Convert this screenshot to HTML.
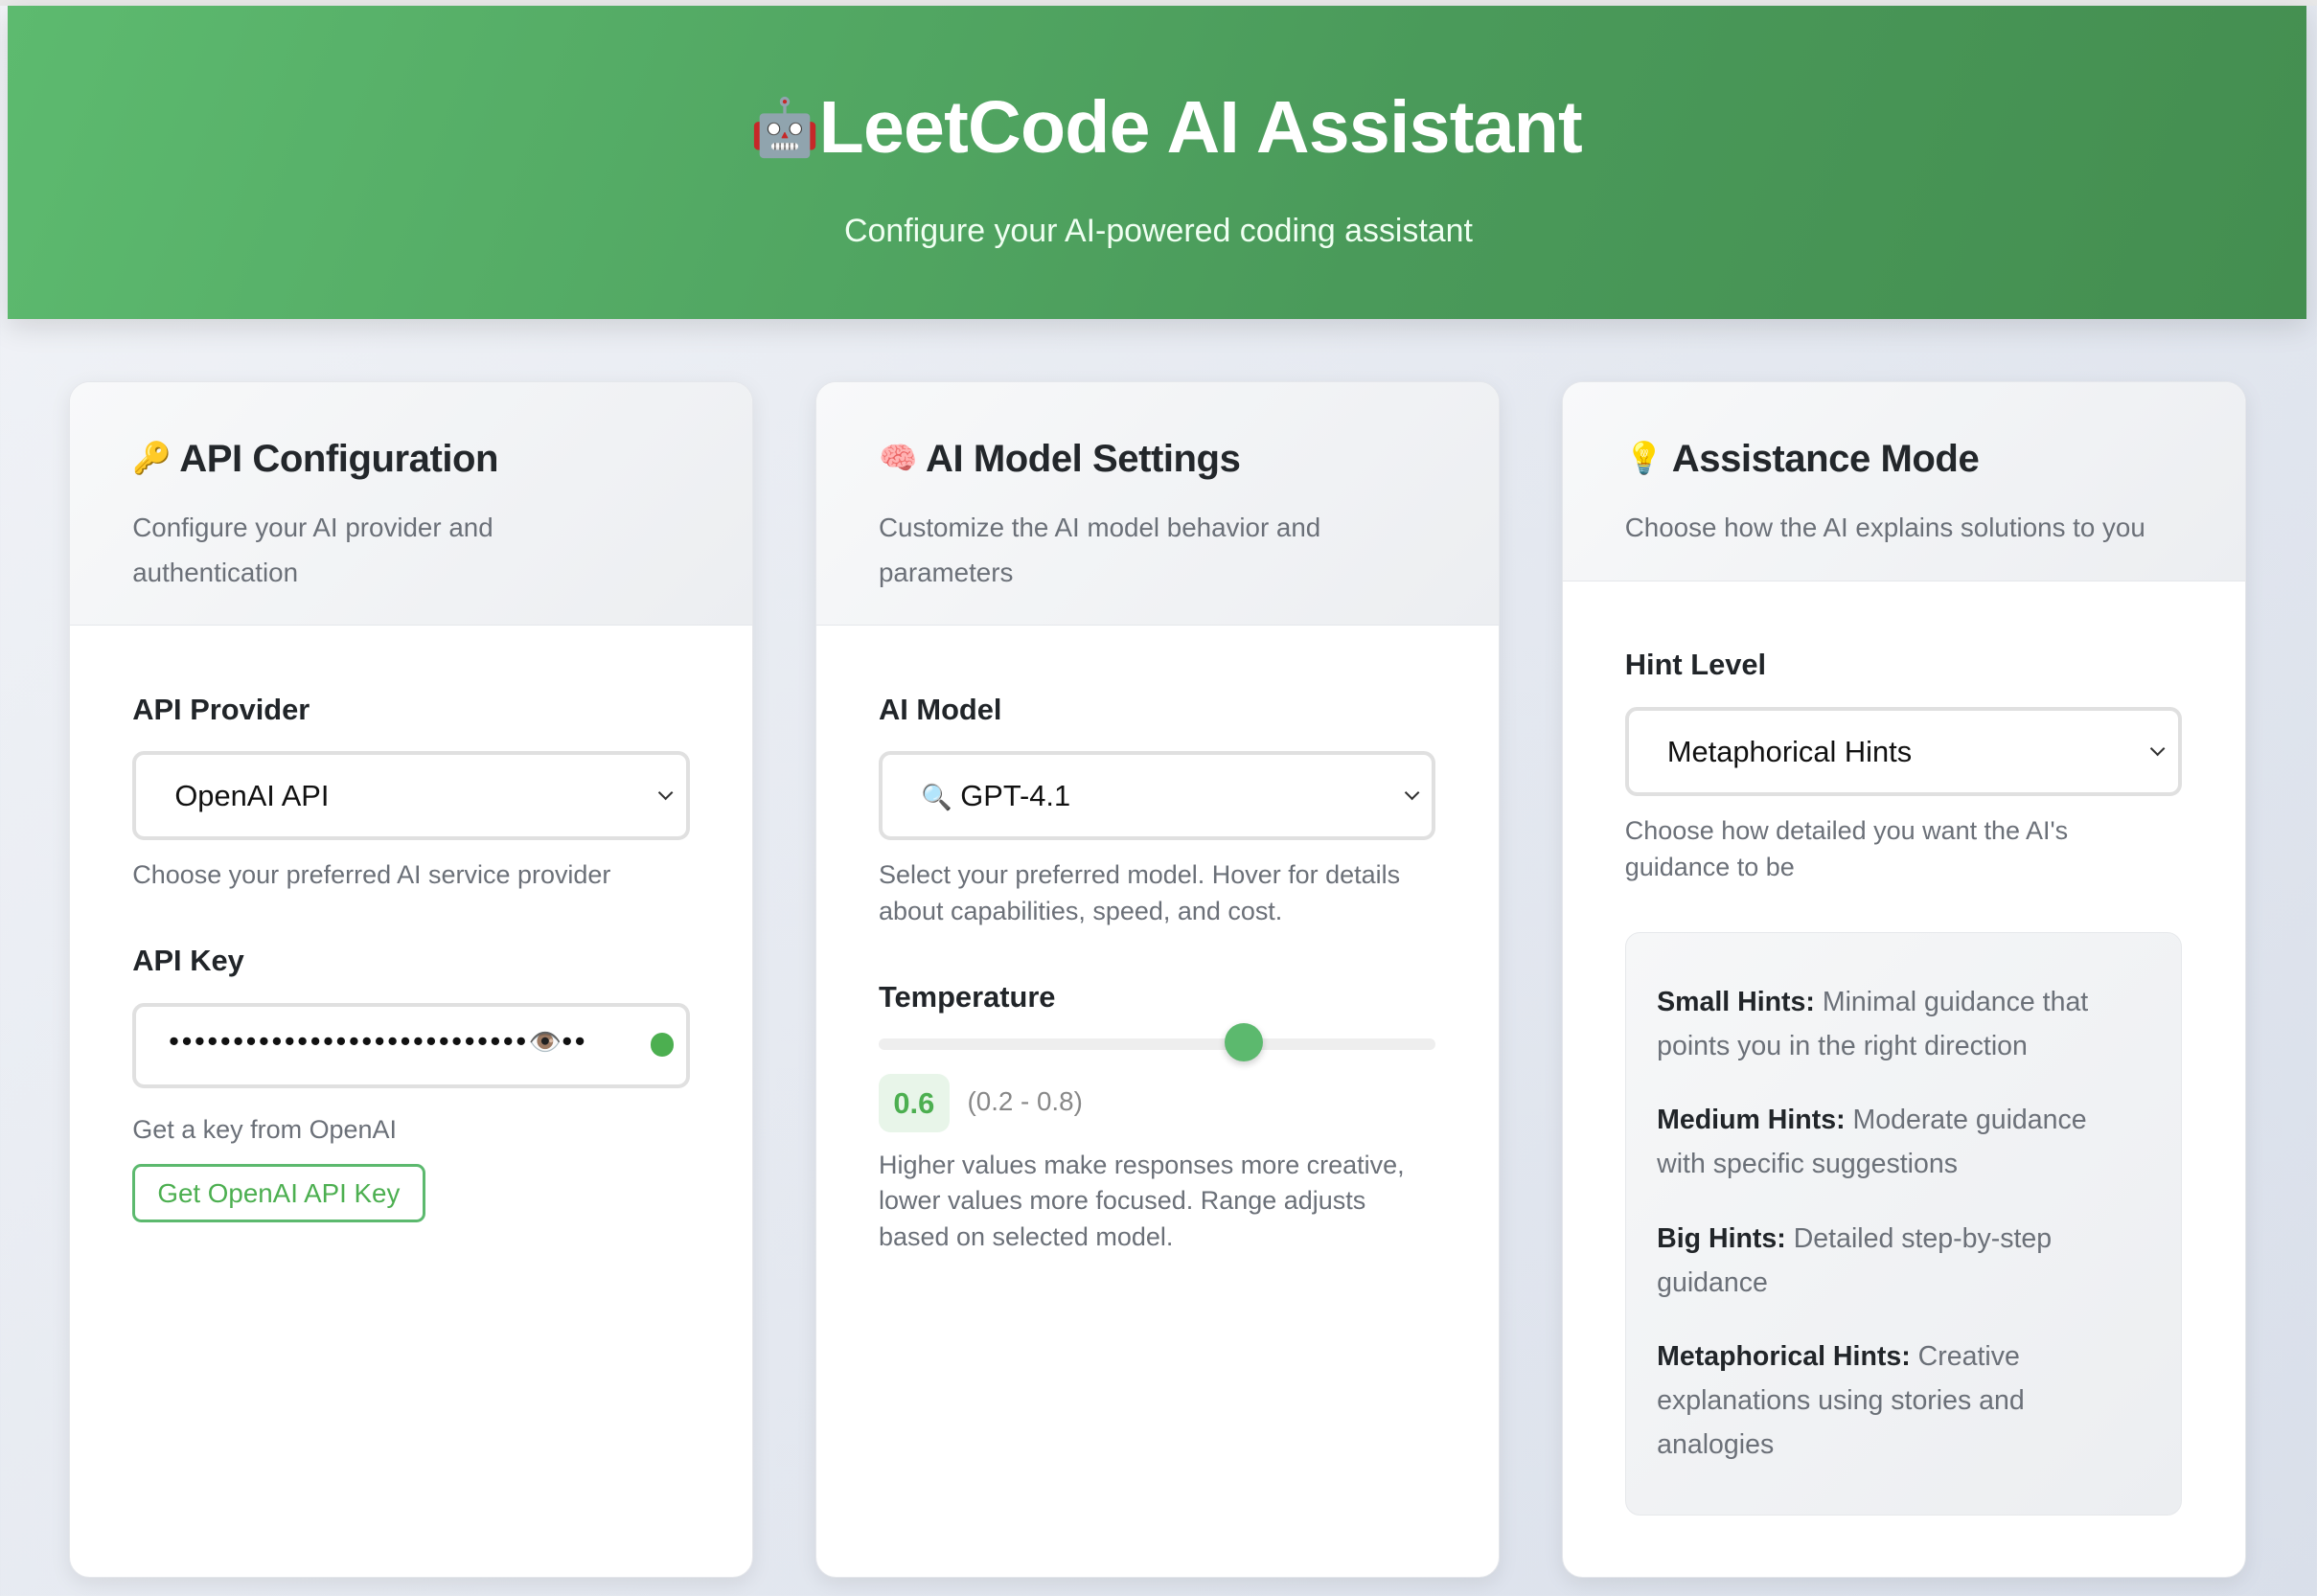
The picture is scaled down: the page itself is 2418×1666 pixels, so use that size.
<!DOCTYPE html>
<html><head><meta charset="utf-8"><style>
*{box-sizing:border-box;margin:0;padding:0}
html,body{width:2418px;height:1666px;overflow:hidden}
body{background:linear-gradient(135deg,#f1f3f7,#d9dfea);font-family:"Liberation Sans","Noto Sans CJK JP",sans-serif}
#w{zoom:1.5421;width:1568px;height:1080px;position:relative}
.a{position:absolute}
.hdr{left:5px;top:4px;width:1556px;height:212px;background:linear-gradient(110deg,#5dba6f,#4a9a5a 60%,#448e50);box-shadow:0 6px 18px rgba(0,0,0,.12)}
.top{left:0;top:0;width:1568px;height:4px;background:#e8e8e8}
h1{position:absolute;left:0;width:1568px;top:58px;text-align:center;color:#fff;font-size:50px;font-weight:700;letter-spacing:-.5px}
.sub{left:0;width:1568px;top:144px;text-align:center;color:#f0fff2;font-size:22px}
.card{top:258px;width:463px;height:810px;background:#fff;border-radius:14px;box-shadow:0 4px 14px rgba(0,0,0,.08);overflow:hidden;border:1px solid #e5e7eb}
.ch{position:absolute;left:0;top:0;width:100%;background:linear-gradient(135deg,#f8f9fa,#eceef1);border-bottom:1px solid #e5e7eb}
.ct{position:absolute;left:42px;top:38px;font-size:26px;font-weight:700;color:#23272b;letter-spacing:-.3px}
.ct i{font-style:normal;font-size:21px;vertical-align:2px}
.cd{position:absolute;left:42px;top:84px;width:340px;font-size:18px;line-height:30px;color:#6b7078}
.lbl{font-size:20px;font-weight:700;color:#212529}
.sel,.inp{width:377px;height:60px;border:3px solid #e0e0e0;border-radius:8px;font-size:20px;color:#111;padding:16px 0 0 26px}
.sel:after{content:"";position:absolute;right:10px;top:22px;width:6px;height:6px;border-right:1.5px solid #333;border-bottom:1.5px solid #333;transform:rotate(45deg)}
.help{font-size:17.5px;line-height:24.5px;color:#6b7078;width:380px}
.info b{color:#212529}
</style></head><body><div id="w">
<div class="a top"></div>
<div class="a hdr"><h1 style="top:54px"><span style="font-size:38px;vertical-align:4px">🤖</span>LeetCode AI Assistant</h1><div class="a sub" style="top:140px;left:-5px">Configure your AI-powered coding assistant</div></div>

<div class="a card" style="left:47px">
<div class="ch" style="height:165px"><div class="ct"><i>🔑</i> API Configuration</div><div class="cd">Configure your AI provider and authentication</div></div>
<div class="a lbl" style="left:42px;top:210px">API Provider</div>
<div class="a sel" style="left:42px;top:250px">OpenAI API</div>
<div class="a help" style="left:42px;top:322px">Choose your preferred AI service provider</div>
<div class="a lbl" style="left:42px;top:380px">API Key</div>
<div class="a inp" style="left:42px;top:420px;height:58px;padding:12px 0 0 22px;font-size:20px;letter-spacing:1.7px">••••••••••••••••••••••••••••<span style="font-size:18px;letter-spacing:0">👁️</span>••<span style="position:absolute;right:8px;top:18px;width:16px;height:16px;border-radius:50%;background:#4caf50"></span></div>
<div class="a help" style="left:42px;top:494px">Get a key from OpenAI</div>
<div class="a" style="left:42px;top:529px;width:198px;height:40px;border:2px solid #5cb96e;border-radius:6px;color:#4caf50;font-size:18px;padding:8px 0 0 15px">Get OpenAI API Key</div>
</div>

<div class="a card" style="left:552px">
<div class="ch" style="height:165px"><div class="ct"><i>🧠</i> AI Model Settings</div><div class="cd">Customize the AI model behavior and parameters</div></div>
<div class="a lbl" style="left:42px;top:210px">AI Model</div>
<div class="a sel" style="left:42px;top:250px"><span style="font-size:17px">🔍</span> GPT-4.1</div>
<div class="a help" style="left:42px;top:322px">Select your preferred model. Hover for details about capabilities, speed, and cost.</div>
<div class="a lbl" style="left:42px;top:405px">Temperature</div>
<div class="a" style="left:42px;top:444px;width:377px;height:8px;border-radius:4px;background:#eeeeee"></div>
<div class="a" style="left:276px;top:434px;width:26px;height:26px;border-radius:50%;background:#5cb96e;box-shadow:0 2px 5px rgba(0,0,0,.2)"></div>
<div class="a" style="left:42px;top:468px;width:48px;height:40px;border-radius:8px;background:#e8f5e9;color:#4caf50;font-weight:700;font-size:20px;padding:9px 0 0 10px">0.6</div>
<div class="a" style="left:102px;top:477px;font-size:18px;color:#888">(0.2 - 0.8)</div>
<div class="a help" style="left:42px;top:518px">Higher values make responses more creative, lower values more focused. Range adjusts based on selected model.</div>
</div>

<div class="a card" style="left:1057px">
<div class="ch" style="height:135px"><div class="ct"><i>💡</i> Assistance Mode</div><div class="cd" style="width:400px">Choose how the AI explains solutions to you</div></div>
<div class="a lbl" style="left:42px;top:180px">Hint Level</div>
<div class="a sel" style="left:42px;top:220px;padding-left:26px">Metaphorical Hints</div>
<div class="a help" style="left:42px;top:292px;width:330px">Choose how detailed you want the AI's guidance to be</div>
<div class="a info" style="left:42px;top:372px;width:377px;height:395px;border-radius:10px;background:linear-gradient(135deg,#f6f7f8,#eceef1);border:1px solid #e6e8eb;padding:32px 40px 0 21px;font-size:18.5px;line-height:30px;color:#6b7078">
<p style="margin-bottom:20px"><b>Small Hints:</b> Minimal guidance that points you in the right direction</p>
<p style="margin-bottom:20px"><b>Medium Hints:</b> Moderate guidance with specific suggestions</p>
<p style="margin-bottom:20px"><b>Big Hints:</b> Detailed step-by-step guidance</p>
<p><b>Metaphorical Hints:</b> Creative explanations using stories and analogies</p>
</div>
</div>
</div></body></html>
